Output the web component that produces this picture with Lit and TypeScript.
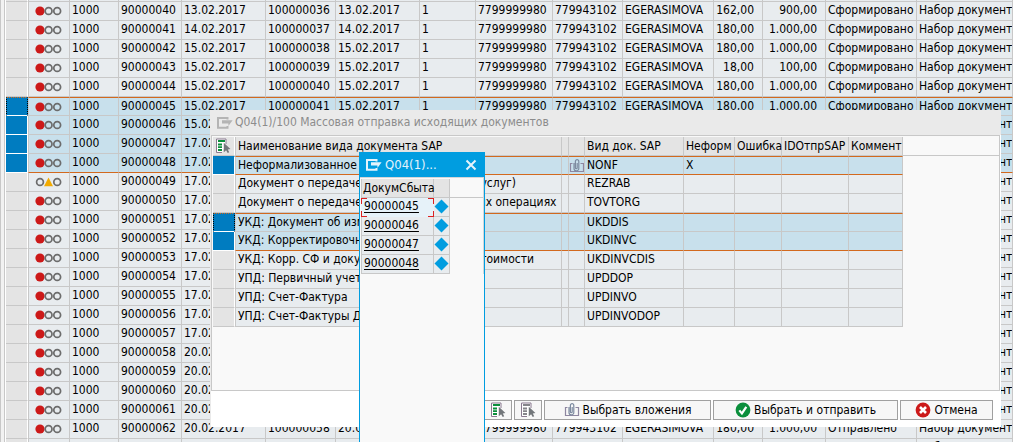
import { LitElement, html, css, svg, nothing } from "lit";
import { customElement } from "lit/decorators.js";
import { classMap } from "lit/directives/class-map.js";

interface DocRow {
  id: number;
  date: string;
  ref: number;
  qty: string;
  sum: string;
  state: string;
  warn?: boolean;
  selected?: boolean;
}

interface KindRow {
  name: string;
  code: string;
  informal?: boolean;
  selected?: boolean;
  focused?: boolean;
}

const dateOf = (id: number): string => {
  if (id <= 40) return "13.02.2017";
  if (id === 41) return "14.02.2017";
  if (id <= 46) return "15.02.2017";
  if (id <= 57) return "17.02.2017";
  return "20.02.2017";
};

const amounts: Record<number, [string, string]> = {
  40: ["162,00", "900,00"],
  43: ["18,00", "100,00"],
};

const documents: DocRow[] = Array.from({ length: 24 }, (_, i) => {
  const id = 40 + i;
  const [qty, sum] = amounts[id] ?? ["180,00", "1.000,00"];
  return {
    id: 90000000 + id,
    date: dateOf(id),
    ref: 100000000 + id - 4,
    qty,
    sum,
    state: id >= 62 ? "Отправлено" : "Сформировано",
    warn: id === 49,
    selected: id >= 45 && id <= 48,
  };
});

const kinds: KindRow[] = [
  { name: "Неформализованное", code: "NONF", informal: true, selected: true },
  { name: "Документ о передаче результатов работ (услуг)", code: "REZRAB" },
  { name: "Документ о передаче товаров при торговых операциях", code: "TOVTORG" },
  { name: "УКД: Документ об изменении", code: "UKDDIS", selected: true, focused: true },
  { name: "УКД: Корректировочный СФ", code: "UKDINVC", selected: true },
  { name: "УКД: Корр. СФ и документ об изменении стоимости", code: "UKDINVCDIS" },
  { name: "УПД: Первичный учетный документ", code: "UPDDOP" },
  { name: "УПД: Счет-Фактура", code: "UPDINVO" },
  { name: "УПД: Счет-Фактуры ДОП", code: "UPDINVODOP" },
];

const lights = (warn: boolean) => html`<svg class="lights" width="28" height="10" viewBox="0 0 28 10" aria-hidden="true">
  ${warn
    ? svg`<circle cx="5" cy="5" r="3.4" fill="none" stroke="#6c6c6c" stroke-width="1.7"/><path d="M13.5 .5L18 9.2H9z" fill="#f2ab00"/>`
    : svg`<circle cx="5" cy="5" r="4.6" fill="#cc1919"/><circle cx="13.6" cy="5" r="3.4" fill="none" stroke="#6c6c6c" stroke-width="1.7"/>`}
  <circle cx="22.2" cy="5" r="3.4" fill="none" stroke="#6c6c6c" stroke-width="1.7"/>
</svg>`;

const windowIcon = html`<svg width="16" height="12" viewBox="0 0 16 12" aria-hidden="true">
  <path d="M10.5 2.5V1H1v9.8h9.5V9" fill="none" stroke="currentColor" stroke-width="2"/>
  <path d="M5 3.2h10.6L11.4 9V6.6H5z" fill="currentColor"/>
</svg>`;

const pickIcon = (bar: string) => html`<svg width="16" height="16" viewBox="0 0 16 16" aria-hidden="true">
  <path d="M11 6V1H1.5v13.5H7" fill="#fff" stroke="#8a7a90" stroke-width="1"/>
  <path d="M3 3h7M3 6.5h4M3 9.2h4M3 12h4" stroke=${bar} stroke-width="1.8"/>
  <path d="M8.8 4.8v9.4l2.3-2 1.6 2.8 1.5-.8-1.4-2.7 2.6-.4z" fill="#73777b"/>
</svg>`;

const clipIcon = html`<svg width="16" height="16" viewBox="0 0 16 16" aria-hidden="true">
  <path d="M3.5 5.5h-2v8h13v-8h-3" fill="none" stroke="#8e86a0" stroke-width="1.2"/>
  <path d="M5 5v5.5a2.4 2.4 0 0 0 4.8 0V3.4a1.7 1.7 0 0 0-3.4 0v6.4a.9.9 0 0 0 1.8 0V5" fill="none" stroke="#7d8ba0" stroke-width="1.2"/>
</svg>`;

const okIcon = html`<svg width="16" height="16" viewBox="0 0 16 16" aria-hidden="true">
  <circle cx="8" cy="8" r="7.4" fill="#0b8f3c"/>
  <path d="M4.3 8.4l2.6 3 4.4-6.6" fill="none" stroke="#fff" stroke-width="2.2"/>
</svg>`;

const cancelIcon = html`<svg width="16" height="16" viewBox="0 0 16 16" aria-hidden="true">
  <circle cx="8" cy="8" r="7.4" fill="#cc1919"/>
  <path d="M5 5l6 6M11 5l-6 6" stroke="#fff" stroke-width="2.6"/>
</svg>`;

const base = css`
  :host {
    box-sizing: border-box;
    font: 12px/17px "DejaVu Sans Condensed", Tahoma, sans-serif;
    color: #000;
  }
  * { box-sizing: border-box; }
  table {
    border-collapse: separate;
    border-spacing: 0;
    table-layout: fixed;
  }
  td, th {
    height: 19px;
    padding: 0 2px 1px;
    font-weight: normal;
    text-align: left;
    white-space: nowrap;
    overflow: hidden;
    background: #e8ecef;
    border: solid #c8c8c8;
    border-width: 0 1px 1px 0;
  }
  th {
    padding: 1px 2px 0;
    overflow: visible;
    background: #e4e4e4;
  }
  svg { display: block; }
  .mark {
    padding: 0;
    background: #e4e4e4;
    border-right-color: #fff;
  }
  .first { border-left-width: 1px; }
  .num { text-align: right; padding-right: 8px; }
  .sel td { background: #c8e0ec; }
  .sel .mark { background: #007cc0; border-bottom-color: #fff; }
  .from td { border-top: 1px solid #d2691e; padding-bottom: 0; }
  .from .mark { border-top-color: #007cc0; }
  .to td { border-bottom-color: #d2691e; }
  .focus .mark {
    border: 1px dotted #000;
    border-top-color: #d2691e;
    border-bottom: 1px solid #fff;
  }
`;

@customElement("document-grid")
class DocumentGrid extends LitElement {
  static styles = [base, css`
    :host {
      display: block;
      border-left: 1px solid #c8c8c8;
      padding-left: 3px;
      background: #f2f2f2;
    }
    .frame { border-left: 1px solid #c8c8c8; padding-left: 1px; background: #fff; }
    table { width: 100%; }
    .top td { height: 2px; line-height: 1px; padding: 0; }
    .status { padding-left: 6px; }
    .c-mark { width: 22px; }
    .c-status { width: 42px; }
    .c-be { width: 49px; }
    .c-id { width: 63px; }
    .c-date { width: 84px; }
    .c-ref { width: 70px; }
    .c-pos { width: 56px; }
    .c-inn { width: 77px; }
    .c-kpp { width: 70px; }
    .c-user { width: 91px; }
    .c-qty { width: 49px; }
    .c-sum { width: 63px; }
    .c-state { width: 91px; }
  `];

  render() {
    return html`<div class="frame"><table>
      <colgroup>
        <col class="c-mark"><col class="c-status"><col class="c-be"><col class="c-id">
        <col class="c-date"><col class="c-ref"><col class="c-date"><col class="c-pos">
        <col class="c-inn"><col class="c-kpp"><col class="c-user"><col class="c-qty">
        <col class="c-sum"><col class="c-state"><col>
      </colgroup>
      <tbody>
        <tr class="top"><td class="mark"></td><td class="first"></td>${Array.from({ length: 13 }, () => html`<td></td>`)}</tr>
        ${documents.map((d, i) => html`<tr class=${classMap({
          sel: !!d.selected,
          from: !!d.selected && !documents[i - 1]?.selected,
          to: !!d.selected && !documents[i + 1]?.selected,
          focus: !!d.selected && !documents[i - 1]?.selected,
        })}>
          <td class="mark"></td>
          <td class="first status">${lights(!!d.warn)}</td>
          <td>1000</td>
          <td>${d.id}</td>
          <td>${d.date}</td>
          <td>${d.ref}</td>
          <td>${d.date}</td>
          <td>1</td>
          <td>7799999980</td>
          <td>779943102</td>
          <td>EGERASIMOVA</td>
          <td class="num">${d.qty}</td>
          <td class="num">${d.sum}</td>
          <td>${d.state}</td>
          <td>Набор документов</td>
        </tr>`)}
      </tbody>
    </table></div>`;
  }
}

@customElement("send-dialog")
class SendDialog extends LitElement {
  static styles = [base, css`
    :host {
      display: flex;
      flex-direction: column;
      background: #fff;
      border-left: 1px solid #eaeaea;
    }
    header {
      display: flex;
      align-items: center;
      gap: 2px;
      height: 25px;
      padding-left: 6px;
      background: #eaeaea;
      color: #8c8c8c;
    }
    header svg { color: #b4b4b4; }
    h2 { margin: 0; font-size: 12px; font-weight: normal; }
    .frame {
      flex: 1;
      margin-right: 1px;
      padding: 1px 0 0 1px;
      border: 1px solid #c8c8c8;
      background: #f9f9f9;
    }
    table { width: 690px; }
    .rest { flex: 1; height: 19px; border-bottom: 1px solid #c8c8c8; }
    .wrap { display: flex; align-items: flex-start; }
    .c-mark { width: 22px; }
    .c-name { width: 327px; }
    .c-gap { width: 7px; }
    .c-clip { width: 16px; }
    .c-code { width: 99px; }
    .c-inf { width: 51px; }
    .c-err { width: 47px; }
    .c-idoc { width: 67px; }
    .c-com { width: 54px; }
    .icon { padding: 0; }
    button {
      font: inherit;
      color: inherit;
      display: flex;
      align-items: center;
      justify-content: center;
      gap: 3px;
      padding: 0;
      margin: 0;
    }
    .all { border: 0; background: none; width: 20px; height: 17px; }
    footer {
      display: flex;
      justify-content: flex-end;
      gap: 2px;
      padding: 9px 8px 7px;
    }
    footer button {
      height: 20px;
      background: #f7f7f7;
      border: 1px solid #a0a0a0;
    }
    .b-icon { width: 28px; }
    .b-attach { width: 167px; }
    .b-send { width: 185px; }
    .b-cancel { width: 93px; }
  `];

  render() {
    return html`
      <header>${windowIcon}<h2>Q04(1)/100 Массовая отправка исходящих документов</h2></header>
      <div class="frame"><div class="wrap">
        <table>
          <colgroup>
            <col class="c-mark"><col class="c-name"><col class="c-gap"><col class="c-clip">
            <col class="c-code"><col class="c-inf"><col class="c-err"><col class="c-idoc"><col class="c-com">
          </colgroup>
          <thead><tr>
            <th class="mark"><button class="all" aria-label="Выделить все">${pickIcon("#0b8f3c")}</button></th>
            <th class="first">Наименование вида документа SAP</th>
            <th></th><th></th>
            <th>Вид док. SAP</th><th>Неформ</th><th>Ошибка</th><th>IDОтпрSAP</th><th>Коммент</th>
          </tr></thead>
          <tbody>
            ${kinds.map((k, i) => html`<tr class=${classMap({
              sel: !!k.selected,
              from: !!k.selected && !kinds[i - 1]?.selected,
              to: !!k.selected && !kinds[i + 1]?.selected,
              focus: !!k.focused,
            })}>
              <td class="mark"></td>
              <td class="first">${k.name}</td>
              <td></td>
              <td class="icon">${k.informal ? clipIcon : nothing}</td>
              <td>${k.code}</td>
              <td>${k.informal ? "X" : nothing}</td>
              <td></td><td></td><td></td>
            </tr>`)}
          </tbody>
        </table>
        <div class="rest"></div>
      </div></div>
      <footer>
        <button class="b-icon" aria-label="Выделить все">${pickIcon("#0b8f3c")}</button>
        <button class="b-icon" aria-label="Снять выделение">${pickIcon("#85858a")}</button>
        <button class="b-attach">${clipIcon}Выбрать вложения</button>
        <button class="b-send">${okIcon}Выбрать и отправить</button>
        <button class="b-cancel">${cancelIcon}Отмена</button>
      </footer>`;
  }
}

@customElement("picked-dialog")
class PickedDialog extends LitElement {
  static styles = [base, css`
    :host {
      display: block;
      background: #f9f9f9;
      border: 1px solid #009de0;
      border-width: 0 1px;
    }
    header {
      display: flex;
      align-items: center;
      gap: 3px;
      height: 25px;
      padding: 0 6px;
      background: #009de0;
      color: #e4f3fb;
    }
    h2 { flex: 1; margin: 0; font-size: 13px; font-weight: normal; }
    .close { border: 0; background: none; color: inherit; padding: 1px 1px 0; margin: 0; }
    .frame {
      border: 1px solid #d2d6d9;
      border-width: 1px 1px 0 0;
      padding: 1px 0 0 1px;
    }
    table { width: 89px; }
    .wrap { display: flex; align-items: flex-start; }
    .rest { flex: 1; height: 19px; border-bottom: 1px solid #c8c8c8; }
    .c-id { width: 73px; }
    .c-key { width: 16px; }
    th.first { padding-left: 1px; }
    a { color: #000; text-decoration: underline; text-underline-offset: 2px; }
    .key { padding: 0 0 2px; }
    .cur {
      background:
        linear-gradient(#d22, #d22) 0 0 / 6px 1px,
        linear-gradient(#d22, #d22) 0 0 / 1px 6px,
        linear-gradient(#d22, #d22) 100% 0 / 6px 1px,
        linear-gradient(#d22, #d22) 100% 0 / 1px 6px,
        linear-gradient(#d22, #d22) 0 100% / 6px 1px,
        linear-gradient(#d22, #d22) 0 100% / 1px 6px,
        linear-gradient(#d22, #d22) 100% 100% / 6px 1px,
        linear-gradient(#d22, #d22) 100% 100% / 1px 6px,
        #e6f2f9;
      background-repeat: no-repeat;
      background-origin: border-box;
      border-color: transparent;
    }
  `];

  render() {
    return html`
      <header>${windowIcon}<h2>Q04(1)...</h2>
        <button class="close" aria-label="Закрыть"><svg width="12" height="12" viewBox="0 0 12 12" aria-hidden="true">
          <path d="M1.5 1.5l9 9M10.5 1.5l-9 9" stroke="currentColor" stroke-width="2"/></svg></button>
      </header>
      <div class="frame"><div class="wrap">
        <table>
          <colgroup><col class="c-id"><col class="c-key"></colgroup>
          <thead><tr><th class="first">ДокумСбыта</th><th></th></tr></thead>
          <tbody>
            ${documents.filter((d) => d.selected).map((d, i) => html`<tr>
              <td class=${classMap({ first: true, cur: i === 0 })}><a href="#${d.id}">${d.id}</a></td>
              <td class="key"><svg width="15" height="15" viewBox="0 0 15 15" aria-hidden="true"><path d="M7.5 .5l7 7-7 7-7-7z" fill="#009de0"/></svg></td>
            </tr>`)}
          </tbody>
        </table>
        <div class="rest"></div>
      </div></div>`;
  }
}

@customElement("app-root")
class AppRoot extends LitElement {
  static styles = css`
    :host {
      display: block;
      position: relative;
      height: 100vh;
      overflow: hidden;
    }
    .send { position: absolute; left: 210px; top: 110px; width: 791px; height: 317px; }
    .picked { position: absolute; left: 359px; top: 152px; bottom: 0; width: 126px; }
  `;

  render() {
    return html`
      <document-grid></document-grid>
      <send-dialog class="send"></send-dialog>
      <picked-dialog class="picked"></picked-dialog>`;
  }
}
